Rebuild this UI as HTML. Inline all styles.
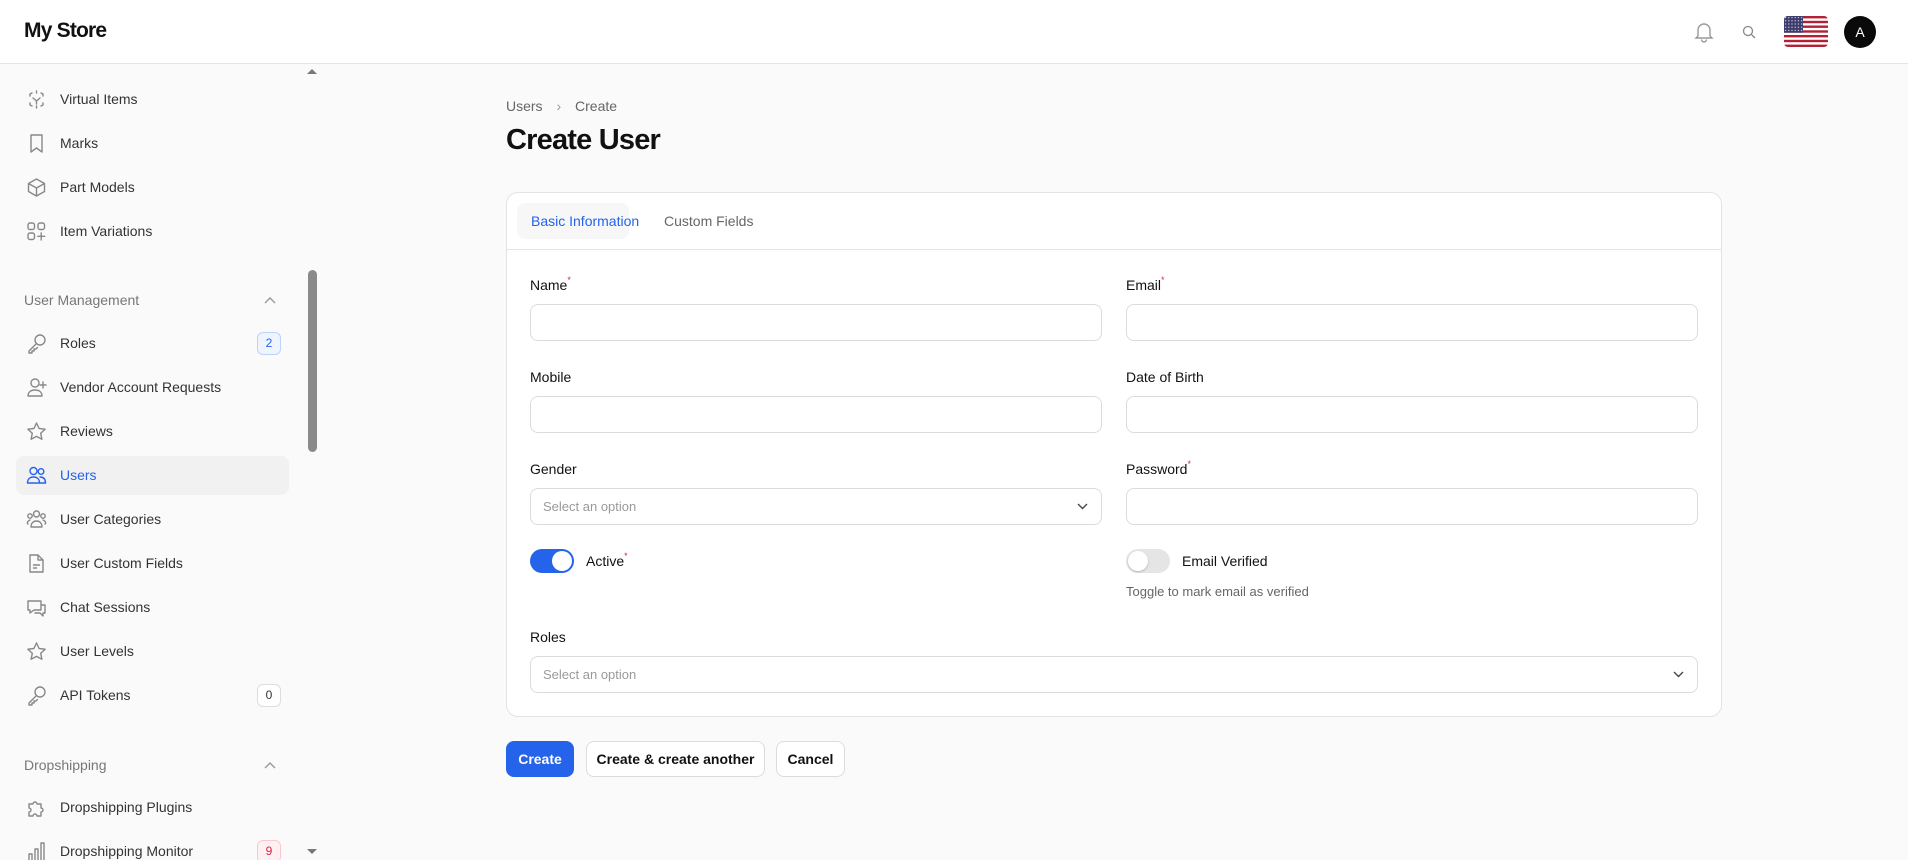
<!DOCTYPE html>
<html><head><meta charset="utf-8"><style>
*{box-sizing:border-box;margin:0;padding:0}
body{width:1908px;height:860px;overflow:hidden;background:#fafafa;font-family:"Liberation Sans",sans-serif;color:#111;position:relative}
.hdr{position:absolute;left:0;top:0;width:1908px;height:64px;background:#fff;border-bottom:1px solid #e5e5e5;z-index:2}
.logo{position:absolute;left:24px;top:19px;font-size:21px;font-weight:bold;letter-spacing:-0.8px}
.side{position:absolute;left:0;top:64px;width:305px;height:796px;background:#fafafa;overflow:hidden}
.it{position:absolute;left:16px;width:273px;height:39px;font-size:14px;color:#333;line-height:39px}
.it svg{position:absolute;left:10px;top:9px;width:21px;height:21px;fill:none;stroke:#888;stroke-width:1.4;stroke-linecap:round;stroke-linejoin:round}
.it span{position:absolute;left:44px}
.it.act{background:#f1f1f1;border-radius:8px;color:#2563eb}
.it.act svg{stroke:#2563eb}
.badge{position:absolute;right:8px;top:8px;width:24px;height:23px;border:1px solid #ddd;border-radius:6px;font-size:12px;line-height:21px;text-align:center;background:#fff}
.grp{position:absolute;left:24px;font-size:14px;color:#777}
.chev{position:absolute;left:264px;width:12px;height:8px}
.track{position:absolute;left:305px;top:64px;width:15px;height:796px;background:#fafafa}
.thumb{position:absolute;left:308px;top:270px;width:9px;height:182px;background:#8a8a8a;border-radius:5px}
.main{position:absolute;left:506px}
.card{position:absolute;left:506px;top:192px;width:1216px;height:525px;background:#fff;border:1px solid #e3e3e3;border-radius:12px}
.lbl{position:absolute;font-size:14px;color:#111}
.lbl i{color:#e11d48;font-style:normal;font-size:9px;vertical-align:top;position:relative;top:-2px}
.inp{position:absolute;height:37px;border:1px solid #dcdcdc;border-radius:8px;background:#fff}
.ph{position:absolute;left:12px;top:10px;font-size:13px;color:#9a9a9a}
.btn{position:absolute;top:741px;height:36px;border-radius:8px;font-size:14px;font-weight:bold;line-height:34px;text-align:center;border:1px solid #dcdcdc;background:#fff}
</style></head><body>
<div class="hdr"><div class="logo">My Store</div>
<svg style="position:absolute;left:1694px;top:21px" width="20" height="22" viewBox="0 0 20 22" fill="none" stroke="#999" stroke-width="1.4"><path d="M4 15V9a6 6 0 0 1 12 0v6l2 2H2z"/><path d="M7.5 18.5a2.5 2.5 0 0 0 5 0"/></svg>
<svg style="position:absolute;left:1742px;top:25px" width="14" height="14" viewBox="0 0 14 14" fill="none" stroke="#888" stroke-width="1.3"><circle cx="6" cy="6" r="4.5"/><path d="M9.3 9.3L13 13"/></svg>
<svg style="position:absolute;left:1784px;top:16px" width="44" height="31" viewBox="0 0 44 31"><defs><clipPath id="c"><rect width="44" height="31" rx="4"/></clipPath><pattern id="st" width="3.2" height="3.2" patternUnits="userSpaceOnUse"><circle cx="1.6" cy="1.6" r="0.6" fill="#fff"/></pattern></defs><g clip-path="url(#c)"><rect width="44" height="31" fill="#fff"/><g fill="#b22234"><rect y="0" width="44" height="2.4"/><rect y="4.8" width="44" height="2.4"/><rect y="9.5" width="44" height="2.4"/><rect y="14.3" width="44" height="2.4"/><rect y="19" width="44" height="2.4"/><rect y="23.8" width="44" height="2.4"/><rect y="28.6" width="44" height="2.4"/></g><rect width="19" height="16.7" fill="#3c3b6e"/><rect width="19" height="16.7" fill="url(#st)"/></g></svg>
<div style="position:absolute;left:1844px;top:16px;width:32px;height:32px;border-radius:50%;background:#0a0a0a;color:#fff;font-size:14px;text-align:center;line-height:32px">A</div>
</div>
<div class="side">
<div class="it" style="top:-28px"><svg viewBox="0 0 21 21"><rect x="3" y="3" width="15" height="15" rx="2"/></svg><span></span></div>
<div class="it" style="top:16px"><svg viewBox="0 0 21 21"><path d="M4 7V5l2-1M15 4l2 1v2M17 14v2l-2 1M6 17l-2-1v-2M10.5 2v2M10.5 17v2M7 9l3.5 3 3.5-3M10.5 12v3"/></svg><span>Virtual Items</span></div>
<div class="it" style="top:60px"><svg viewBox="0 0 21 21"><path d="M5 2h11v17l-5.5-4L5 19z"/></svg><span>Marks</span></div>
<div class="it" style="top:104px"><svg viewBox="0 0 21 21"><path d="M10.5 2l8 4.5v8l-8 4.5-8-4.5v-8zM2.5 6.5l8 4.5 8-4.5M10.5 11v8"/></svg><span>Part Models</span></div>
<div class="it" style="top:148px"><svg viewBox="0 0 21 21"><rect x="2" y="2" width="6.5" height="6.5" rx="2"/><rect x="12" y="2" width="6.5" height="6.5" rx="2"/><rect x="2" y="12" width="6.5" height="6.5" rx="2"/><path d="M15.2 12v7M11.8 15.3h7"/></svg><span>Item Variations</span></div>
<div class="grp" style="top:228px">User Management</div>
<svg class="chev" style="top:232px" viewBox="0 0 12 8" fill="none" stroke="#999" stroke-width="1.4"><path d="M1 7l5-5 5 5"/></svg>
<div class="it" style="top:260px"><svg viewBox="0 0 21 21"><circle cx="14" cy="7" r="5"/><path d="M10.5 10.5L3 18v2h3v-2h2v-2h2l1.5-1.5"/></svg><span>Roles</span><div class="badge" style="background:#eff5ff;border-color:#bcd3fb;color:#2563eb">2</div></div>
<div class="it" style="top:304px"><svg viewBox="0 0 21 21"><circle cx="9" cy="6" r="4"/><path d="M2 19c0-4 3-6 7-6s7 2 7 6zM17 5v6M14 8h6"/></svg><span>Vendor Account Requests</span></div>
<div class="it" style="top:348px"><svg viewBox="0 0 21 21"><path d="M10.5 2l2.6 5.5 6 .7-4.4 4.1 1.2 6L10.5 15.4 5.1 18.3l1.2-6L1.9 8.2l6-.7z"/></svg><span>Reviews</span></div>
<div class="it act" style="top:392px"><svg viewBox="0 0 21 21"><circle cx="7.5" cy="6" r="3.5"/><circle cx="15" cy="6.5" r="2.8"/><path d="M1.5 18c0-4 2.5-6 6-6s6 2 6 6zM14 12c3.5 0 5.5 2 5.5 6h-5"/></svg><span>Users</span></div>
<div class="it" style="top:436px"><svg viewBox="0 0 21 21"><circle cx="10.5" cy="5" r="3"/><circle cx="4" cy="7" r="2.2"/><circle cx="17" cy="7" r="2.2"/><path d="M5 18c0-4 2.5-6 5.5-6s5.5 2 5.5 6zM2 15c-1 0-1-3 2-4M19 15c1 0 1-3-2-4"/></svg><span>User Categories</span></div>
<div class="it" style="top:480px"><svg viewBox="0 0 21 21"><path d="M4 2h8l5 5v12H4zM12 2v5h5M7.5 12h6M7.5 15h3"/></svg><span>User Custom Fields</span></div>
<div class="it" style="top:524px"><svg viewBox="0 0 21 21"><path d="M2 4h13v9H8l-4 3v-3H2zM15 8h4v8h-2v3l-3-3h-5"/></svg><span>Chat Sessions</span></div>
<div class="it" style="top:568px"><svg viewBox="0 0 21 21"><path d="M10.5 2l2.6 5.5 6 .7-4.4 4.1 1.2 6L10.5 15.4 5.1 18.3l1.2-6L1.9 8.2l6-.7z"/></svg><span>User Levels</span></div>
<div class="it" style="top:612px"><svg viewBox="0 0 21 21"><circle cx="14" cy="7" r="5"/><path d="M10.5 10.5L3 18v2h3v-2h2v-2h2l1.5-1.5"/></svg><span>API Tokens</span><div class="badge" style="color:#333">0</div></div>
<div class="grp" style="top:693px">Dropshipping</div>
<svg class="chev" style="top:697px" viewBox="0 0 12 8" fill="none" stroke="#999" stroke-width="1.4"><path d="M1 7l5-5 5 5"/></svg>
<div class="it" style="top:724px"><svg viewBox="0 0 21 21"><path d="M3 7h4a2 2 0 1 1 4 0h4v4a2 2 0 1 1 0 4v4h-4a2 2 0 1 0-4 0H3v-4a2 2 0 1 0 0-4z"/></svg><span>Dropshipping Plugins</span></div>
<div class="it" style="top:768px"><svg viewBox="0 0 21 21"><path d="M3 20v-7h3v7M9 20V8h3v12M15 20V2h3v18"/></svg><span>Dropshipping Monitor</span><div class="badge" style="background:#fff1f2;border-color:#fbc6ce;color:#e11d48">9</div></div>
</div>
<div class="track"></div><div class="thumb"></div>
<svg style="position:absolute;left:307px;top:68px" width="10" height="7"><path d="M0 6l5-5 5 5z" fill="#777"/></svg>
<svg style="position:absolute;left:307px;top:848px" width="10" height="7"><path d="M0 1l5 5 5-5z" fill="#777"/></svg>

<div class="main" style="top:98px;font-size:14px;color:#666">Users <span style="margin:0 10px;color:#999">›</span> Create</div>
<div class="main" style="top:124px;font-size:29px;font-weight:bold;letter-spacing:-0.8px">Create User</div>
<div class="card">
<div style="position:absolute;left:10px;top:10px;width:112px;height:36px;background:#f7f7f7;border-radius:8px"></div>
<div style="position:absolute;left:24px;top:20px;font-size:14px;color:#2563eb">Basic Information</div>
<div style="position:absolute;left:157px;top:20px;font-size:14px;color:#666">Custom Fields</div>
<div style="position:absolute;left:0;top:56px;width:1214px;height:1px;background:#e5e5e5"></div>
</div>
<div class="lbl" style="left:530px;top:277px">Name<i>*</i></div>
<div class="inp" style="left:530px;top:304px;width:572px"></div>
<div class="lbl" style="left:1126px;top:277px">Email<i>*</i></div>
<div class="inp" style="left:1126px;top:304px;width:572px"></div>
<div class="lbl" style="left:530px;top:369px">Mobile</div>
<div class="inp" style="left:530px;top:396px;width:572px"></div>
<div class="lbl" style="left:1126px;top:369px">Date of Birth</div>
<div class="inp" style="left:1126px;top:396px;width:572px"></div>
<div class="lbl" style="left:530px;top:461px">Gender</div>
<div class="inp" style="left:530px;top:488px;width:572px"><div class="ph">Select an option</div><svg style="position:absolute;right:13px;top:14px" width="11" height="7" viewBox="0 0 11 7" fill="none" stroke="#444" stroke-width="1.4"><path d="M1 1l4.5 4.5L10 1"/></svg></div>
<div class="lbl" style="left:1126px;top:461px">Password<i>*</i></div>
<div class="inp" style="left:1126px;top:488px;width:572px"></div>
<div style="position:absolute;left:530px;top:549px;width:44px;height:24px;border-radius:12px;background:#2563eb"><div style="position:absolute;left:22px;top:2px;width:20px;height:20px;border-radius:50%;background:#fff"></div></div>
<div class="lbl" style="left:586px;top:553px">Active<i>*</i></div>
<div style="position:absolute;left:1126px;top:549px;width:44px;height:24px;border-radius:12px;background:#e5e5e5"><div style="position:absolute;left:2px;top:2px;width:20px;height:20px;border-radius:50%;background:#fff;box-shadow:0 1px 2px rgba(0,0,0,.2)"></div></div>
<div class="lbl" style="left:1182px;top:553px">Email Verified</div>
<div style="position:absolute;left:1126px;top:584px;font-size:13px;color:#666">Toggle to mark email as verified</div>
<div class="lbl" style="left:530px;top:629px">Roles</div>
<div class="inp" style="left:530px;top:656px;width:1168px"><div class="ph">Select an option</div><svg style="position:absolute;right:13px;top:14px" width="11" height="7" viewBox="0 0 11 7" fill="none" stroke="#444" stroke-width="1.4"><path d="M1 1l4.5 4.5L10 1"/></svg></div>
<div class="btn" style="left:506px;width:68px;background:#2563eb;border-color:#2563eb;color:#fff">Create</div>
<div class="btn" style="left:586px;width:179px">Create &amp; create another</div>
<div class="btn" style="left:776px;width:69px">Cancel</div>
</body></html>
